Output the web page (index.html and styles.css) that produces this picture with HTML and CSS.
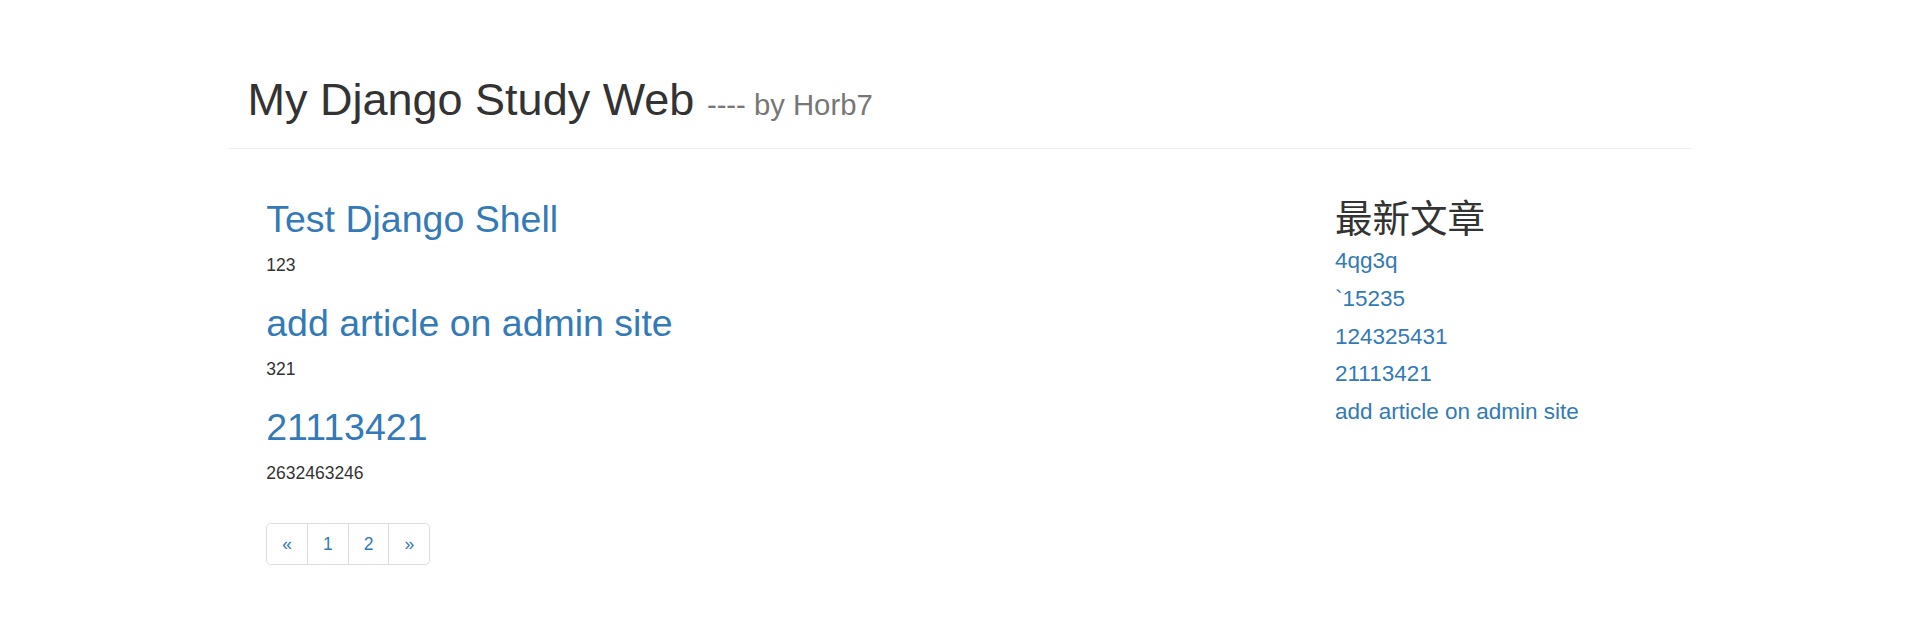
FILE: index.html
```
<!DOCTYPE html>
<html lang="zh-CN">
<head>
<meta charset="utf-8">
<title>My Django Study Web</title>
<link rel="stylesheet" href="styles.css">
</head>
<body>
<div class="container">
  <div class="page-header">
    <h1>My Django Study Web <small>---- by Horb7</small></h1>
  </div>
  <div class="content">
    <div class="row">
      <div class="blog-main">
        <div class="post">
          <h2><a href="#">Test Django Shell</a></h2>
          <p>123</p>
        </div>
        <div class="post">
          <h2><a href="#">add article on admin site</a></h2>
          <p>321</p>
        </div>
        <div class="post">
          <h2><a href="#">21113421</a></h2>
          <p>2632463246</p>
        </div>
        <ul class="pagination">
          <li><a href="#">&laquo;</a></li>
          <li><a href="#">1</a></li>
          <li><a href="#">2</a></li>
          <li><a href="#">&raquo;</a></li>
        </ul>
      </div>
      <div class="blog-sidebar">
        <h2>最新文章</h2>
        <h4><a href="#">4qg3q</a></h4>
        <h4><a href="#">`15235</a></h4>
        <h4><a href="#">124325431</a></h4>
        <h4><a href="#">21113421</a></h4>
        <h4><a href="#">add article on admin site</a></h4>
      </div>
    </div>
  </div>
</div>
</body>
</html>
```
FILE: styles.css
```
* { box-sizing: border-box; }
html, body { margin: 0; padding: 0; }
body {
  font-family: "Liberation Sans", Arial, "Noto Sans CJK SC", sans-serif;
  font-size: 17.5px;
  line-height: 25px;
  color: #333;
  background: #fff;
}
a { color: #337ab7; text-decoration: none; }

.container {
  width: 1462.5px;
  margin: 0 auto;
}

.page-header {
  padding: 75px 18.75px 11.25px;
  border-bottom: 1px solid #eee;
  margin: 0 0 25px;
}
.page-header h1 {
  margin: 0 0 12.5px;
  font-size: 45px;
  line-height: 49.5px;
  font-weight: 500;
}
.page-header h1 small {
  font-size: 65%;
  line-height: 1;
  color: #777;
  font-weight: normal;
}

.content { padding: 0 18.75px; }

.row {
  display: grid;
  grid-template-columns: 66.6667% 8.3333% 25%;
}
.blog-main { grid-column: 1; padding: 0 18.75px; }
.blog-sidebar { grid-column: 3; padding: 0 18.75px; }

h2 {
  font-size: 37.5px;
  line-height: 41.25px;
  font-weight: 500;
  margin: 25px 0 12.5px;
}
.post p { margin: 0 0 12.5px; }

.blog-sidebar h2 {
  margin-bottom: 8.5px;
  font-weight: normal;
}
.blog-sidebar h4 {
  font-size: 22.5px;
  line-height: 24.75px;
  font-weight: 500;
  margin: 0 0 13px;
}

.pagination {
  display: inline-flex;
  list-style: none;
  padding: 0;
  margin: 25px 0;
  border-radius: 5px;
}
.pagination li a {
  display: block;
  padding: 7.5px 15px;
  line-height: 25px;
  font-size: 17.5px;
  border: 1px solid #ddd;
  margin-left: -1px;
  color: #337ab7;
  background: #fff;
}
.pagination li:first-child a {
  margin-left: 0;
  border-radius: 5px 0 0 5px;
}
.pagination li:last-child a {
  border-radius: 0 5px 5px 0;
}
```
